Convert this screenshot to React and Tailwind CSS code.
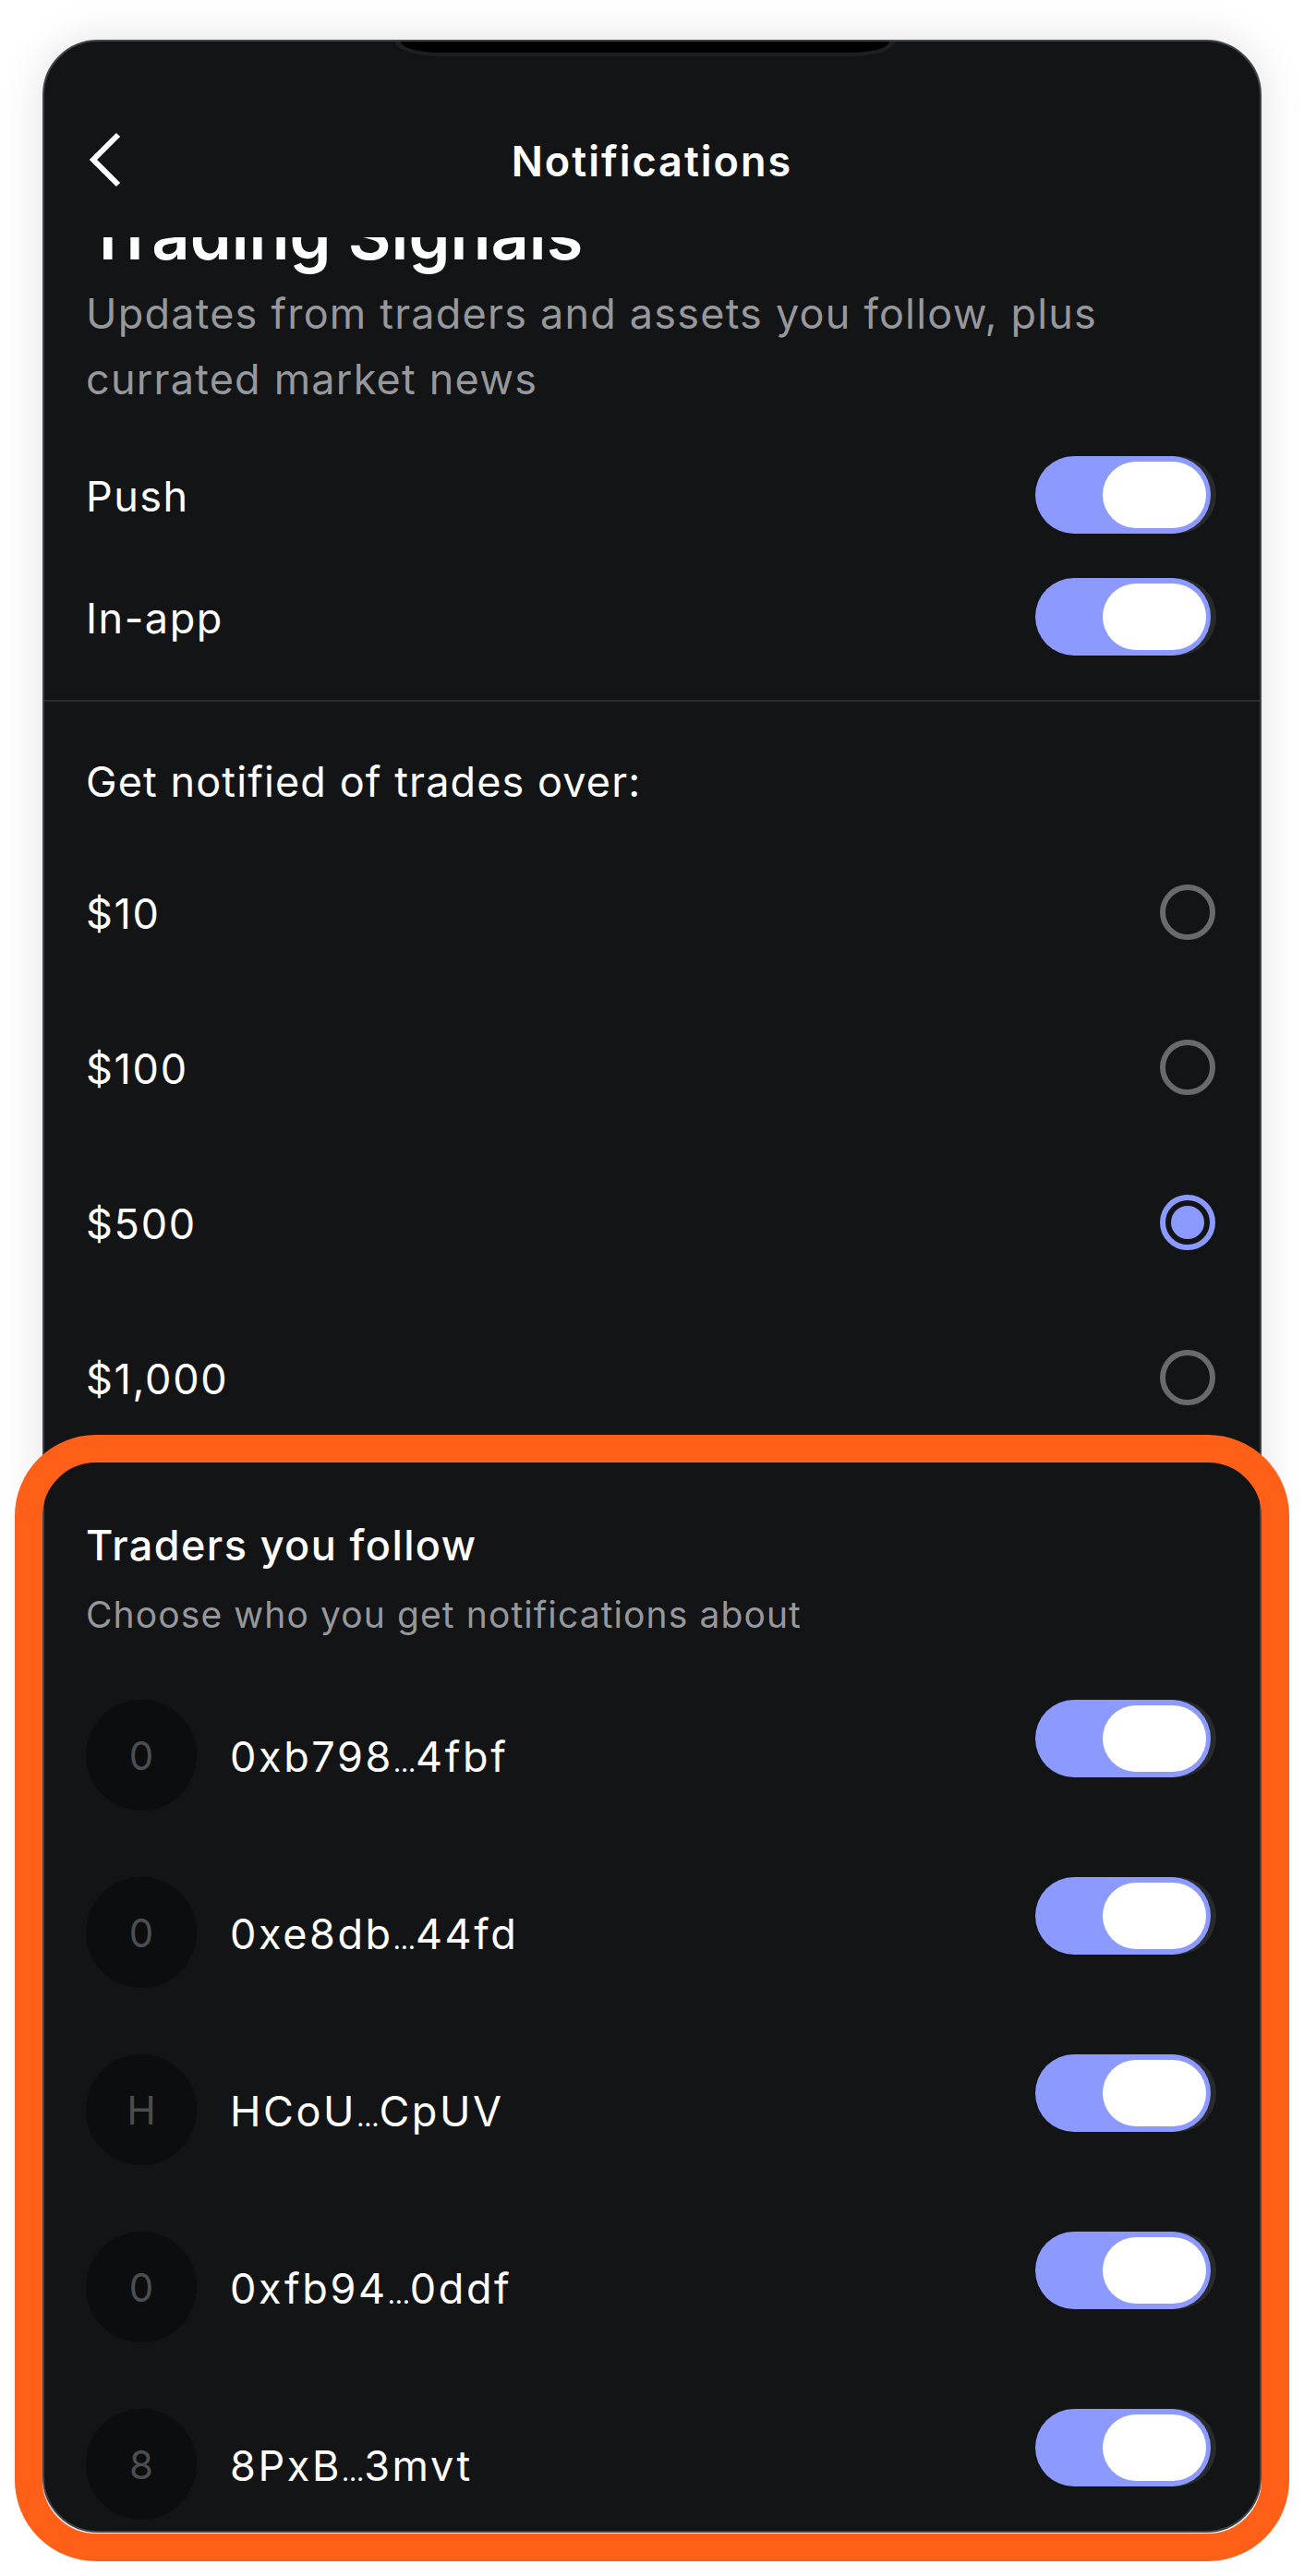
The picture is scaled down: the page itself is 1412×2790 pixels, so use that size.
const amounts = [
    { label: '$10', selected: false },
    { label: '$100', selected: false },
    { label: '$500', selected: true },
    { label: '$1,000', selected: false },
];

const traders = [
    { initial: '0', start: '0xb798', end: '4fbf' },
    { initial: '0', start: '0xe8db', end: '44fd' },
    { initial: 'H', start: 'HCoU', end: 'CpUV' },
    { initial: '0', start: '0xfb94', end: '0ddf' },
    { initial: '8', start: '8PxB', end: '3mvt' },
];

function Toggle() {
    return (
        <div className="flex h-[84px] w-[190px] shrink-0 items-center justify-end rounded-full bg-[#8c9aff] pr-[5px] shadow-[6px_0_0_#292a2c]">
            <div className="h-[72px] w-[112px] rounded-full bg-white" />
        </div>
    );
}

function Radio({ selected }) {
    if (selected) {
        return (
            <div className="flex h-[60px] w-[60px] items-center justify-center rounded-full border-[6px] border-[#8c9aff]">
                <div className="h-[36px] w-[36px] rounded-full bg-[#8c9aff]" />
            </div>
        );
    }
    return <div className="h-[60px] w-[60px] rounded-full border-[6px] border-[#6a6a6a]" />;
}

export default function App() {
    return (
        <div className="relative h-[2790px] w-full overflow-hidden bg-white pt-[43px] font-['Inter',sans-serif] text-white">
            <div className="relative mx-auto flex h-[2700px] w-[1320px] flex-col overflow-hidden rounded-[60px] border-2 border-[#40434b] bg-[#131416] shadow-[0_0_48px_rgba(0,0,0,0.12)]">
                {/* Notch */}
                <div className="absolute left-[380px] top-0 h-[16px] w-[541px] rounded-b-[48px_16px] border-x-[6px] border-b-[4px] border-[#1e1f22] bg-black" />

                {/* Header */}
                <div className="relative flex h-[212px] shrink-0 items-center justify-center pt-[48px]">
                    <svg className="absolute left-[48px] top-[98px]" width="38" height="60" viewBox="0 0 38 60" fill="none">
                        <path d="M32 3L5 30L32 57" stroke="white" strokeWidth="6" />
                    </svg>
                    <h1 className="text-[45px] font-semibold leading-[60px] tracking-[2px]">Notifications</h1>
                </div>

                <div className="flex-1 overflow-hidden px-[45px]">
                    <h2 className="-mt-[42px] text-[72px] font-semibold leading-[80px]">Trading Signals</h2>
                    <p className="mt-[9px] w-[1150px] text-[45px] leading-[71px] tracking-[1.2px] text-[#97989c]">
                        Updates from traders and assets you follow, plus currated market news
                    </p>

                    <div className="mt-[48px] flex items-center justify-between pr-[8px]">
                        <span className="pt-[3px] text-[45px] tracking-[1.5px]">Push</span>
                        <Toggle />
                    </div>
                    <div className="mt-[48px] flex items-center justify-between pr-[8px]">
                        <span className="pt-[3px] text-[45px] tracking-[1.5px]">In-app</span>
                        <Toggle />
                    </div>

                    <div className="-mx-[45px] mt-[48px] h-[2px] bg-[#2a2c2f]" />

                    <p className="mt-[57px] text-[45px] leading-[60px] tracking-[1.1px]">Get notified of trades over:</p>

                    <div className="mt-[81px] flex flex-col gap-[108px]">
                        {amounts.map((amount) => (
                            <div key={amount.label} className="flex items-center justify-between pr-[3px]">
                                <span className="pt-[3px] text-[45px] leading-[54px] tracking-[1.7px]">{amount.label}</span>
                                <Radio selected={amount.selected} />
                            </div>
                        ))}
                    </div>

                    <p className="mt-[122px] text-[45px] font-medium leading-[60px] tracking-[1.4px]">Traders you follow</p>
                    <p className="mt-[20px] text-[39px] leading-[50px] tracking-[1.1px] text-[#97989c]">Choose who you get notifications about</p>

                    <div className="mt-[67px] flex flex-col gap-[72px]">
                        {traders.map((trader) => (
                            <div key={trader.start} className="flex items-start justify-between pr-[8px]">
                                <div className="flex items-center gap-[36px]">
                                    <div className="flex h-[120px] w-[120px] items-center justify-center rounded-full bg-[#0c0d0e] text-[42px] text-[#4c4d4f]">
                                        {trader.initial}
                                    </div>
                                    <span className="pt-[3px] text-[45px] tracking-[2.6px]">
                                        {trader.start}
                                        <span className="text-[28px] tracking-normal">…</span>
                                        {trader.end}
                                    </span>
                                </div>
                                <Toggle />
                            </div>
                        ))}
                    </div>
                </div>
            </div>

            {/* Highlight frame */}
            <div className="pointer-events-none absolute left-[16px] top-[1554px] h-[1220px] w-[1380px] rounded-[88px] border-[30px] border-[#ff5f17]" />
        </div>
    );
}
